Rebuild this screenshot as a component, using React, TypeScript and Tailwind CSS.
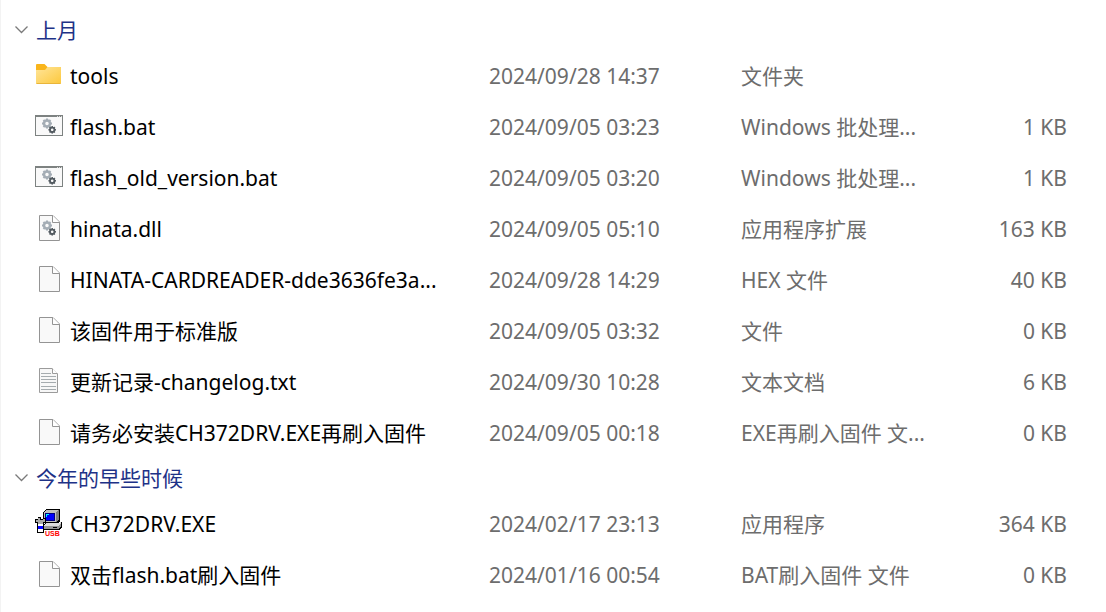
import type { ReactNode } from "react";

type IconKind = "folder" | "bat" | "dll" | "file" | "txt" | "usb";

interface Entry {
  icon: IconKind;
  name: string;
  date: string;
  type: string;
  size: string;
}

interface Group {
  title: string;
  entries: Entry[];
}

const groups: Group[] = [
  {
    title: "上月",
    entries: [
      { icon: "folder", name: "tools", date: "2024/09/28 14:37", type: "文件夹", size: "" },
      { icon: "bat", name: "flash.bat", date: "2024/09/05 03:23", type: "Windows 批处理...", size: "1 KB" },
      { icon: "bat", name: "flash_old_version.bat", date: "2024/09/05 03:20", type: "Windows 批处理...", size: "1 KB" },
      { icon: "dll", name: "hinata.dll", date: "2024/09/05 05:10", type: "应用程序扩展", size: "163 KB" },
      { icon: "file", name: "HINATA-CARDREADER-dde3636fe3a...", date: "2024/09/28 14:29", type: "HEX 文件", size: "40 KB" },
      { icon: "file", name: "该固件用于标准版", date: "2024/09/05 03:32", type: "文件", size: "0 KB" },
      { icon: "txt", name: "更新记录-changelog.txt", date: "2024/09/30 10:28", type: "文本文档", size: "6 KB" },
      { icon: "file", name: "请务必安装CH372DRV.EXE再刷入固件", date: "2024/09/05 00:18", type: "EXE再刷入固件 文...", size: "0 KB" },
    ],
  },
  {
    title: "今年的早些时候",
    entries: [
      { icon: "usb", name: "CH372DRV.EXE", date: "2024/02/17 23:13", type: "应用程序", size: "364 KB" },
      { icon: "file", name: "双击flash.bat刷入固件", date: "2024/01/16 00:54", type: "BAT刷入固件 文件", size: "0 KB" },
    ],
  },
];

const teeth = [0, 45, 90, 135, 180, 225, 270, 315];

function Gear({ cx, cy, r, color }: { cx: number; cy: number; r: number; color: string }) {
  return (
    <g transform={`translate(${cx} ${cy})`}>
      {teeth.map((a) => (
        <rect key={a} x={-r * 0.26} y={-r * 1.25} width={r * 0.52} height={r * 0.6} fill={color} transform={`rotate(${a})`} />
      ))}
      <circle r={r * 0.74} fill="none" stroke={color} strokeWidth={r * 0.6} />
    </g>
  );
}

function Page({ children }: { children?: ReactNode }) {
  return (
    <>
      <path d="M4.5 2.5H18L24.5 9V27.5H4.5Z" fill="#f9f9f9" stroke="#949494" />
      <path d="M17.5 2.5V9.5H24.5" fill="#fff" stroke="#949494" />
      {children}
    </>
  );
}

const drawings: Record<IconKind, ReactNode> = {
  folder: (
    <>
      <defs>
        <linearGradient id="folder-face" x1="0" y1="0" x2="1" y2="1">
          <stop offset="0" stopColor="#ffe59a" />
          <stop offset="1" stopColor="#fcc83c" />
        </linearGradient>
      </defs>
      <path d="M1 5Q1 4 2 4H9.5L12.5 7H25Q26 7 26 8V14H1Z" fill="#f9b51b" />
      <path d="M1 10H10L12.5 7H25Q26 7 26 8V23Q26 24 25 24H2Q1 24 1 23Z" fill="url(#folder-face)" />
      <path d="M1.5 23.5H25.5" stroke="#e9b53a" />
    </>
  ),
  bat: (
    <>
      <rect x="0.5" y="4.5" width="27" height="20" fill="#f9f9f9" stroke="#7d8281" />
      <path d="M0 5H28" stroke="#7d8281" strokeWidth="2" />
      <path d="M22 5.5H23M24 5.5H25M26 5.5H27" stroke="#d8d8d8" />
      <Gear cx={12} cy={12.5} r={4} color="#a4adb5" />
      <Gear cx={17.2} cy={18.8} r={3} color="#525a60" />
    </>
  ),
  dll: (
    <Page>
      <Gear cx={12} cy={12.5} r={4} color="#a4adb5" />
      <Gear cx={17.2} cy={18.8} r={3} color="#525a60" />
    </Page>
  ),
  file: <Page />,
  txt: (
    <>
      <path d="M4.5 2.5H17L22.5 8V26.5H4.5Z" fill="#f7f7f7" stroke="#9b9b9b" />
      <path d="M17.5 2.5V7.5H22.5" fill="#fff" stroke="#9b9b9b" />
      <path d="M6 7.5H16M6 10.5H21M6 13.5H21M6 16.5H21M6 20.5H21M6 23.5H21" stroke="#a5abae" />
    </>
  ),
  usb: (
    <>
      <g transform="translate(0 1)" shapeRendering="crispEdges">
        <path d="M11 0H25V12L23 14H8V3Z" fill="#000" />
        <path d="M11 1H24V11L21 13H9V4Z" fill="#c0c0c0" />
        <path d="M21 3L24 1V11L21 13Z" fill="#808080" />
        <path d="M10 4H20V12H10Z" fill="#000080" />
        <path d="M11 5H19V11H11Z" fill="#0000ff" />
        <path d="M11 5H14V6H12V8H11Z" fill="#00ffff" />
        <path d="M11 14H25L27 12V18L24 21H8V16Z" fill="#000" />
        <path d="M11 14H24L26 13V15L23 17H9V16Z" fill="#dcdcdc" />
        <path d="M9 17H23L26 15V17L23 20H9Z" fill="#969696" />
        <path d="M18 18H22" stroke="#000" />
        <path d="M3 8H6V10H9V9H11V14H9V16H2V14H0V10H3Z" fill="#000" />
        <path d="M3 9H5V11H8V10H10V13H8V15H3V13H1V11H3Z" fill="#a8a8a8" />
        <path d="M2 15H9V24H2Z" fill="#000" />
        <path d="M3 15H8V23H3Z" fill="#fff" />
        <path d="M3 17H8V20H3Z" fill="#0000ff" />
      </g>
      <rect x="10" y="22" width="16" height="6" fill="#fff" />
      <text x="10" y="28" fontSize="7" fontFamily="Liberation Sans, sans-serif" fontWeight="700" fill="#ff0000">USB</text>
    </>
  ),
};

function FileIcon({ kind }: { kind: IconKind }) {
  return (
    <svg viewBox="0 0 28 28" className="mb-[3px] size-7 shrink-0" aria-hidden="true">
      {drawings[kind]}
    </svg>
  );
}

export default function App() {
  return (
    <main className="min-h-screen border-l border-[#f3f3f3] bg-white pt-2.5 font-['Noto_Sans','Noto_Sans_CJK_SC',sans-serif] text-[21px] leading-7 text-[#6d6d6d]">
      <table className="w-full table-fixed border-collapse whitespace-nowrap">
        <colgroup>
          <col className="w-[488px]" />
          <col className="w-[252px]" />
          <col className="w-[204px]" />
          <col />
        </colgroup>
        {groups.map((group) => (
          <tbody key={group.title}>
            <tr className="h-10">
              <th colSpan={4} scope="rowgroup" className="p-0 pl-3 text-left font-normal text-[#1e3287]">
                <button type="button" aria-expanded="true" className="flex items-center gap-[7px]">
                  <svg viewBox="0 0 16 16" className="size-4" fill="none" stroke="#7a7a7a" strokeWidth="1.3" aria-hidden="true">
                    <path d="M2.500 4.500L8.500 10.500L14.500 4.500" />
                  </svg>
                  {group.title}
                </button>
              </th>
            </tr>
            {group.entries.map((entry) => (
              <tr key={entry.name} className="h-[51px]">
                <td className="p-0 pl-[34px] text-black">
                  <div className="flex items-center gap-[7px]">
                    <FileIcon kind={entry.icon} />
                    {entry.name}
                  </div>
                </td>
                <td className="p-0">{entry.date}</td>
                <td className="p-0">{entry.type}</td>
                <td className="p-0 pr-[39px] text-right">{entry.size}</td>
              </tr>
            ))}
          </tbody>
        ))}
      </table>
    </main>
  );
}
